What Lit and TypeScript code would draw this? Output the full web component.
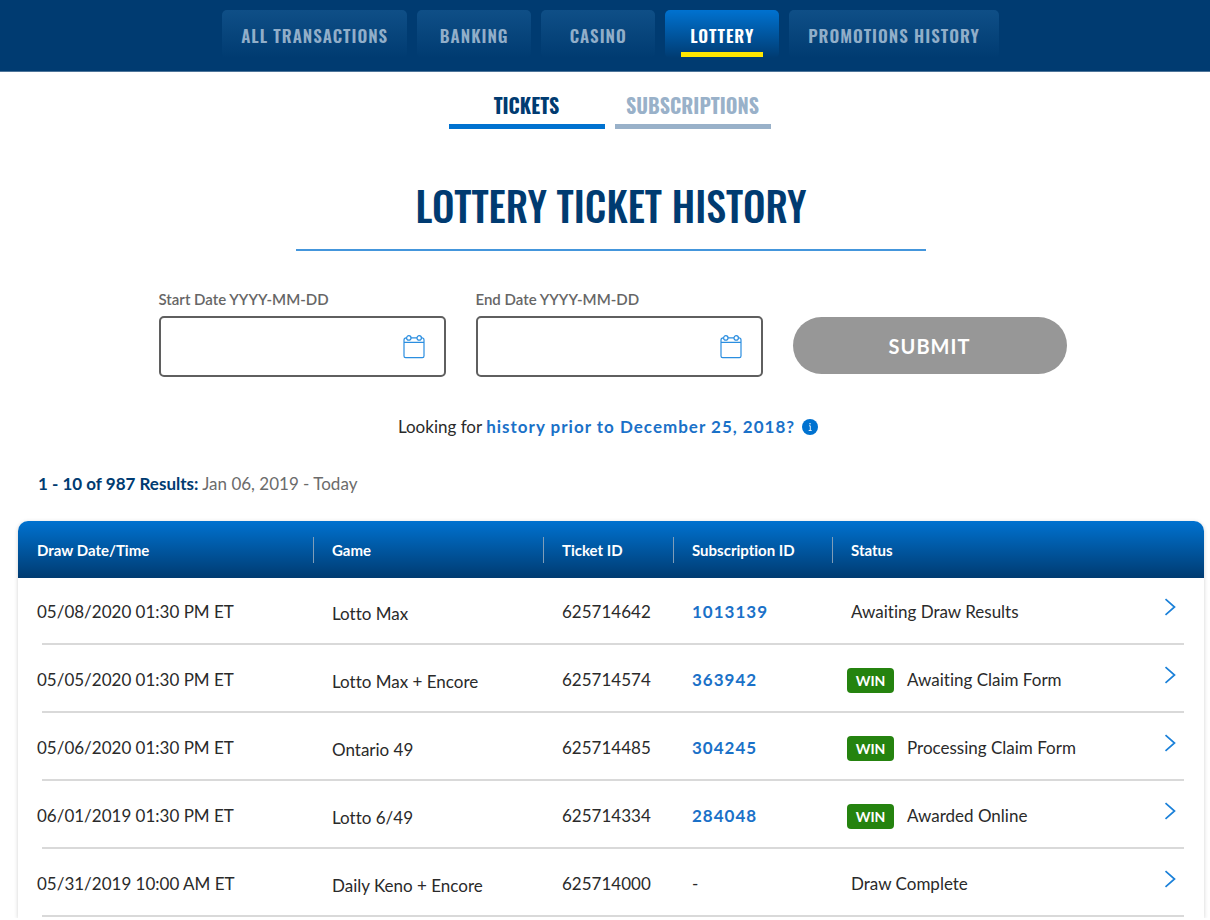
import { LitElement, html, css, svg, nothing } from "lit";
import { customElement, property } from "lit/decorators.js";

interface Ticket {
  date: string;
  game: string;
  ticket: string;
  subscription?: string;
  win?: boolean;
  status: string;
}

const SECTIONS = ["All Transactions", "Banking", "Casino", "Lottery", "Promotions History"];

const TICKETS: Ticket[] = [
  { date: "05/08/2020 01:30 PM ET", game: "Lotto Max", ticket: "625714642", subscription: "1013139", status: "Awaiting Draw Results" },
  { date: "05/05/2020 01:30 PM ET", game: "Lotto Max + Encore", ticket: "625714574", subscription: "363942", win: true, status: "Awaiting Claim Form" },
  { date: "05/06/2020 01:30 PM ET", game: "Ontario 49", ticket: "625714485", subscription: "304245", win: true, status: "Processing Claim Form" },
  { date: "06/01/2019 01:30 PM ET", game: "Lotto 6/49", ticket: "625714334", subscription: "284048", win: true, status: "Awarded Online" },
  { date: "05/31/2019 10:00 AM ET", game: "Daily Keno + Encore", ticket: "625714000", status: "Draw Complete" },
];

const calendarIcon = svg`<svg width="22" height="24" viewBox="0 0 22 24" fill="none" stroke="#2b8ee0" stroke-width="1.2" aria-hidden="true">
  <path d="M3.6 2.9H3A2 2 0 0 0 1 4.9V21a1.6 1.6 0 0 0 1.6 1.6h16.8A1.6 1.6 0 0 0 21 21V4.9a2 2 0 0 0-2-2h-.6M8 2.9h6M1 7.4h20"/>
  <circle cx="5.8" cy="2.9" r="2.2"/><circle cx="16.2" cy="2.9" r="2.2"/></svg>`;

@customElement("date-field")
export class DateField extends LitElement {
  @property() label = "";

  static styles = css`
    :host { display: block; }
    .label { display: block; font-size: 15px; line-height: 18px; font-weight: 600; color: #666; }
    .box {
      display: flex; align-items: center; box-sizing: border-box; height: 61px; margin-top: 8px;
      padding-right: 19px; border: 2px solid #5f5f5f; border-radius: 5px; background: #fff;
    }
    .input {
      flex: 1; min-width: 0; height: 100%; box-sizing: border-box; padding: 0 16px; border: 0; outline: 0;
      background: transparent; font: 17px Lato, sans-serif; color: #333;
    }
    .open { display: flex; padding: 0; border: 0; background: none; cursor: pointer; }
  `;

  render() {
    return html`
      <label class="label" for="date">${this.label}</label>
      <div class="box">
        <input class="input" id="date" type="text" />
        <button class="open" type="button" aria-label="Open calendar">${calendarIcon}</button>
      </div>`;
  }
}

@customElement("app-root")
export class AppRoot extends LitElement {
  static styles = css`
    :host { display: block; font-family: Lato, sans-serif; font-variant-ligatures: none; color: #2a2a2a; background: #fff; }
    .nav {
      display: flex; justify-content: center; gap: 10px; box-sizing: border-box;
      padding: 10px 0 13px 11px; background: #003b71; border-bottom: 1px solid #4d7499;
    }
    .tab, .subtab, .title { font-family: Oswald, "Liberation Sans Narrow", sans-serif; text-transform: uppercase; }
    .tab, .subtab { font-weight: 600; text-decoration: none; }
    .tab {
      display: flex; flex-direction: column; align-items: center; box-sizing: border-box; min-width: 114px; height: 48px;
      padding: 13px 19px 0; border-radius: 5px; background: linear-gradient(#0f4f87, #003b71);
      color: #91aec9; font-size: 17px; line-height: 26px; letter-spacing: 1px; white-space: nowrap;
    }
    .tab.current { padding: 13px 16px 0; background: linear-gradient(#0072d0, #003b71); color: #fff; }
    .tab.current::after { content: ""; align-self: stretch; height: 5px; margin-top: 3px; background: #ffe600; }
    .subtabs { display: flex; justify-content: center; gap: 10px; padding: 19px 0 0 9px; }
    .subtab {
      width: 156px; border-bottom: 5px solid #99b1c9; padding-bottom: 5px; color: #99b1c9;
      font-size: 20px; line-height: 28px; font-weight: 700; text-align: center;
    }
    .subtab.current { color: #003b71; border-color: #0072d0; }
    .main { padding: 0 6px 0 18px; }
    .title {
      max-width: 630px; margin: 44px auto 0; padding-bottom: 12px; border-bottom: 2px solid #4496dc;
      color: #003b71; font-size: 40px; line-height: 64px; font-weight: 500; text-align: center;
    }
    .filters { display: grid; grid-template-columns: 287px 287px 274px; justify-content: center; align-items: end; gap: 30px; padding: 39px 0 0 3px; }
    .submit {
      height: 57px; margin-bottom: 3px; border: 0; border-radius: 29px; background: #979797; color: #fff;
      font: 700 20px Lato, sans-serif; letter-spacing: 1px;
    }
    .older { display: flex; justify-content: center; align-items: center; margin: 38px 0 0; padding-right: 6px; font-size: 17px; line-height: 24px; gap: 4px; }
    .older-link { color: #1a71c8; font-weight: 700; letter-spacing: 1px; text-decoration: none; }
    .info { display: flex; margin-left: 3px; padding: 0; border: 0; background: none; cursor: pointer; }
    .results { margin: 33px 0 0 20px; font-size: 17px; line-height: 24px; color: #6b6b6b; }
    .count { color: #003b71; font-weight: 700; }
    .card { margin-top: 25px; border-radius: 10px 10px 0 0; overflow: hidden; box-shadow: 0 1px 4px rgba(0, 0, 0, 0.18); }
    .table { width: 100%; border-collapse: collapse; table-layout: fixed; text-align: left; }
    .c-date { width: 295px; }
    .c-game { width: 230px; }
    .c-ticket { width: 130px; }
    .c-sub { width: 159px; }
    .c-open { width: 60px; }
    .head { background: linear-gradient(#0072d0, #003b71); }
    .th { height: 57px; padding: 0; color: #fff; font-size: 15px; line-height: 26px; font-weight: 700; }
    .th-text { display: block; padding-left: 19px; }
    .th + .th .th-text { border-left: 1px solid #7f9db8; padding-left: 18px; }
    .row { background: linear-gradient(#d9d9d9, #d9d9d9) right 20px bottom 1px / calc(100% - 44px) 2px no-repeat; }
    .td { height: 68px; box-sizing: border-box; padding: 0 0 0 19px; font-size: 17px; line-height: 24px; white-space: nowrap; }
    .td.game { padding-top: 4px; }
    .sub { color: #1a71c8; font-weight: 700; letter-spacing: 1px; text-decoration: none; }
    .status { display: flex; align-items: center; gap: 13px; }
    .status.won { margin-left: -4px; }
    .win { width: 47px; border-radius: 4px; background: #25830f; color: #fff; font-size: 14px; line-height: 25px; font-weight: 700; text-align: center; }
    .td.last { padding: 0 28px 10px 0; }
    .open { display: flex; margin-left: auto; padding: 0; border: 0; background: none; cursor: pointer; }
  `;

  render() {
    return html`
      <nav class="nav" aria-label="History">
        ${SECTIONS.map((s) => html`<a href="#" class="tab ${s === "Lottery" ? "current" : ""}">${s}</a>`)}
      </nav>
      <nav class="subtabs" aria-label="Lottery">
        <a href="#" class="subtab current">Tickets</a>
        <a href="#" class="subtab">Subscriptions</a>
      </nav>
      <main class="main">
        <h1 class="title">Lottery Ticket History</h1>
        <form class="filters" @submit=${(e: Event) => e.preventDefault()}>
          <date-field label="Start Date YYYY-MM-DD"></date-field>
          <date-field label="End Date YYYY-MM-DD"></date-field>
          <button class="submit" type="submit">SUBMIT</button>
        </form>
        <p class="older">
          <span>Looking for</span>
          <a class="older-link" href="#">history prior to December 25, 2018?</a>
          <button class="info" type="button" aria-label="More information">
            <svg width="16" height="16" viewBox="0 0 16 16"><circle cx="8" cy="8" r="8" fill="#0072d0"/><path d="M7 6.8h1.3v4.7M6.7 11.5h3" fill="none" stroke="#dcecf9" stroke-width="1"/><circle cx="8" cy="4.7" r=".8" fill="#dcecf9"/></svg>
          </button>
        </p>
        <p class="results"><span class="count">1 - 10 of 987 Results:</span> Jan 06, 2019 - Today</p>
        <div class="card">
          <table class="table">
            <colgroup><col class="c-date" /><col class="c-game" /><col class="c-ticket" /><col class="c-sub" /><col /><col class="c-open" /></colgroup>
            <thead class="head">
              <tr>
                ${["Draw Date/Time", "Game", "Ticket ID", "Subscription ID", "Status"].map(
                  (h) => html`<th class="th" scope="col"><span class="th-text">${h}</span></th>`
                )}
                <td></td>
              </tr>
            </thead>
            <tbody>
              ${TICKETS.map(
                (t) => html`<tr class="row">
                  <td class="td">${t.date}</td>
                  <td class="td game">${t.game}</td>
                  <td class="td">${t.ticket}</td>
                  <td class="td">${t.subscription ? html`<a class="sub" href="#">${t.subscription}</a>` : "-"}</td>
                  <td class="td"><div class="status ${t.win ? "won" : ""}">${t.win ? html`<span class="win">WIN</span>` : nothing}<span>${t.status}</span></div></td>
                  <td class="td last">
                    <button class="open" type="button" aria-label="Ticket details">
                      <svg width="12" height="18" viewBox="0 0 12 18" fill="none" stroke="#1a80d9" stroke-width="1.7"><path d="M1.5 1.2 10.5 9l-9 7.8"/></svg>
                    </button>
                  </td>
                </tr>`
              )}
            </tbody>
          </table>
        </div>
      </main>`;
  }
}
